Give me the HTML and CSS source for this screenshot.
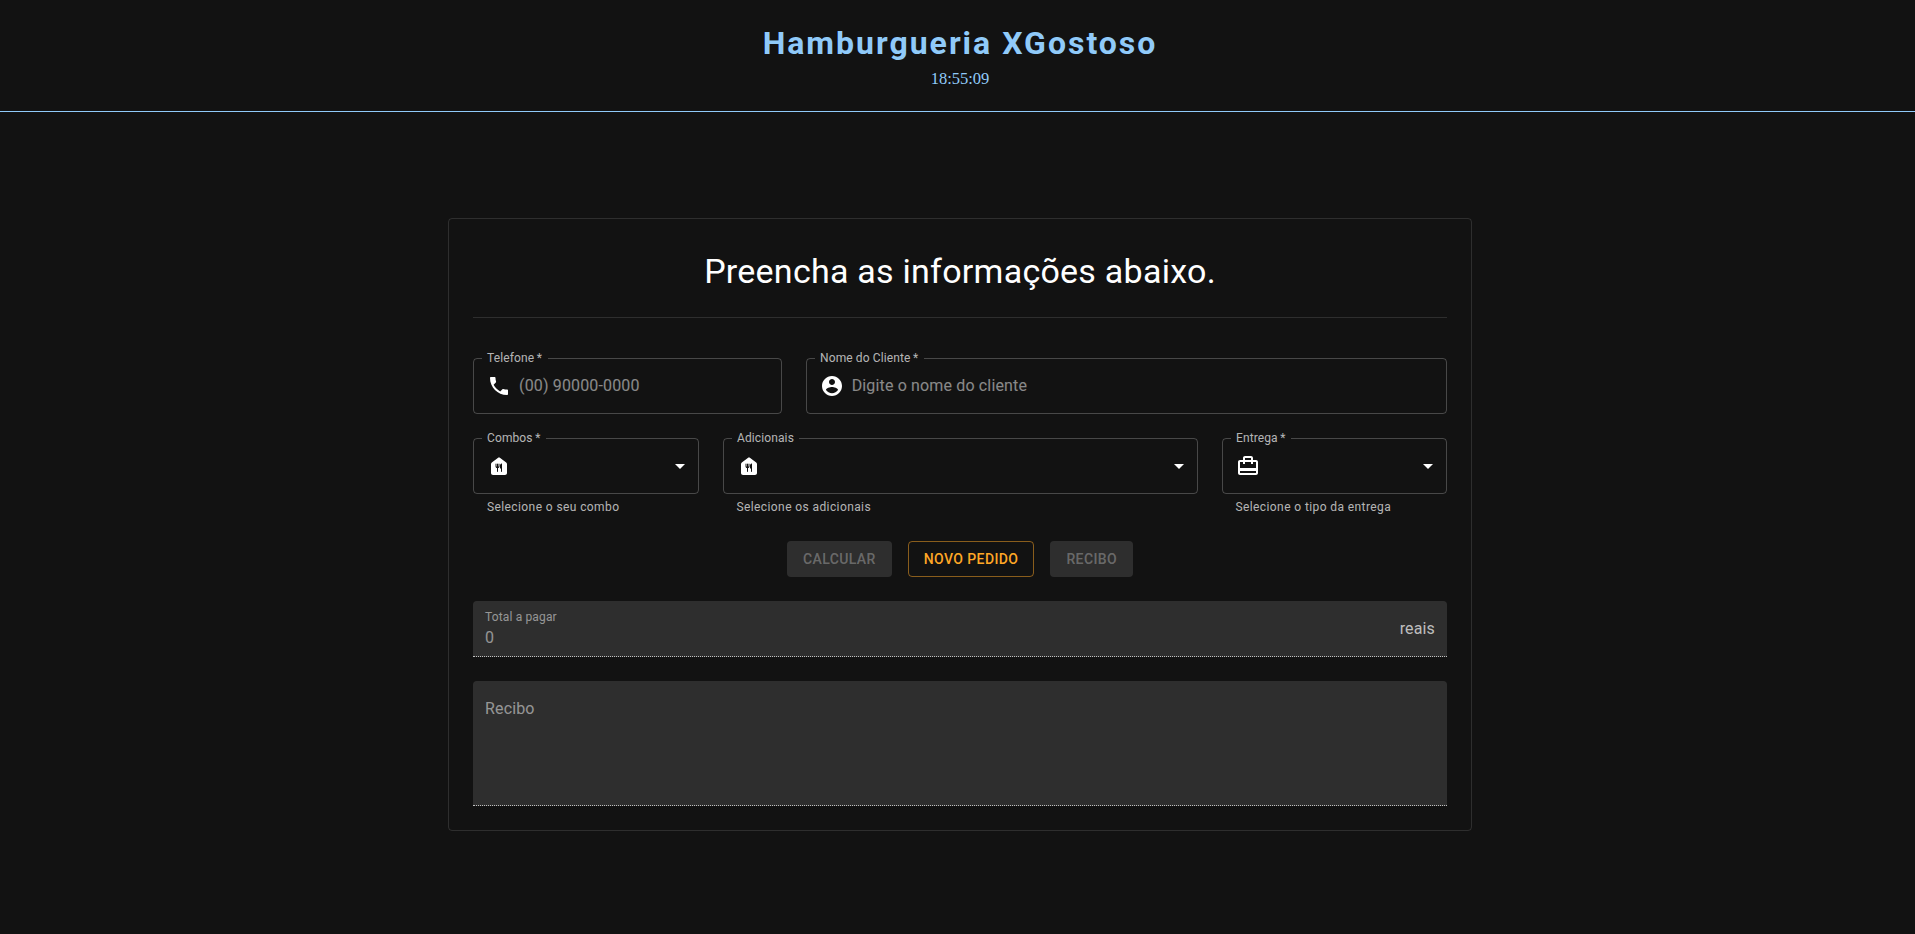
FILE: index.html
```html
<!DOCTYPE html>
<html lang="pt-BR">
<head>
<meta charset="utf-8">
<title>Hamburgueria XGostoso</title>
<link rel="stylesheet" href="styles.css">
</head>
<body>
<div class="page">
<header class="header">
  <h1 class="brand">Hamburgueria XGostoso</h1>
  <time class="clock">18:55:09</time>
</header>
<main class="card">
  <h2 class="title">Preencha as informações abaixo.</h2>
  <hr class="divider">
  <form class="grid">
    <div class="field col-4">
      <label class="label">Telefone&thinsp;*</label>
      <div class="control">
        <svg class="icon" viewBox="0 0 24 24"><path d="M6.62 10.79c1.44 2.83 3.76 5.14 6.59 6.59l2.2-2.2c.27-.27.67-.36 1.02-.24 1.12.37 2.33.57 3.57.57.55 0 1 .45 1 1V20c0 .55-.45 1-1 1-9.39 0-17-7.61-17-17 0-.55.45-1 1-1h3.5c.55 0 1 .45 1 1 0 1.25.2 2.45.57 3.57.11.35.03.74-.25 1.02l-2.2 2.2z"/></svg>
        <input class="input" placeholder="(00) 90000-0000">
        <fieldset class="outline"><legend class="notch">Telefone *</legend></fieldset>
      </div>
    </div>
    <div class="field col-8">
      <label class="label">Nome do Cliente&thinsp;*</label>
      <div class="control">
        <svg class="icon" viewBox="0 0 24 24"><path d="M12 2C6.48 2 2 6.48 2 12s4.48 10 10 10 10-4.48 10-10S17.52 2 12 2zm0 3c1.66 0 3 1.34 3 3s-1.34 3-3 3-3-1.34-3-3 1.34-3 3-3zm0 14.2c-2.5 0-4.71-1.28-6-3.22.03-1.99 4-3.08 6-3.08 1.99 0 5.97 1.09 6 3.08-1.29 1.94-3.5 3.22-6 3.22z"/></svg>
        <input class="input" placeholder="Digite o nome do cliente">
        <fieldset class="outline"><legend class="notch">Nome do Cliente *</legend></fieldset>
      </div>
    </div>
    <div class="field col-3">
      <label class="label">Combos&thinsp;*</label>
      <div class="control select">
        <svg class="icon" viewBox="0 0 24 24"><path d="M19.2 8.4l-6-4.5c-.71-.53-1.69-.53-2.4 0l-6 4.5C4.3 8.78 4 9.37 4 10v9c0 1.1.9 2 2 2h12c1.1 0 2-.9 2-2v-9c0-.63-.3-1.22-.8-1.6zM12.5 12.5c0 .83-.67 1.5-1.5 1.5v3.5c0 .28-.22.5-.5.5s-.5-.22-.5-.5V14c-.83 0-1.5-.67-1.5-1.5V10c0-.28.22-.5.5-.5s.5.22.5.5v2.5h.5V10c0-.28.22-.5.5-.5s.5.22.5.5v2.5h.5V10c0-.28.22-.5.5-.5s.5.22.5.5v2.5zM15 17.500c0 .28-.22.5-.5.5s-.5-.22-.5-.5v-3h-1v-3c0-.97.7-1.78 1.62-1.96.2-.04.38.12.38.32v8.14z"/></svg>
        <svg class="icon" viewBox="0 0 24 24"><path d="M7 10l5 5 5-5z"/></svg>
        <fieldset class="outline"><legend class="notch">Combos *</legend></fieldset>
      </div>
      <p class="helper">Selecione o seu combo</p>
    </div>
    <div class="field col-6">
      <label class="label">Adicionais</label>
      <div class="control select">
        <svg class="icon" viewBox="0 0 24 24"><path d="M19.2 8.4l-6-4.5c-.71-.53-1.69-.53-2.4 0l-6 4.5C4.3 8.78 4 9.37 4 10v9c0 1.1.9 2 2 2h12c1.1 0 2-.9 2-2v-9c0-.63-.3-1.22-.8-1.6zM12.5 12.5c0 .83-.67 1.5-1.5 1.5v3.5c0 .28-.22.5-.5.5s-.5-.22-.5-.5V14c-.83 0-1.5-.67-1.5-1.5V10c0-.28.22-.5.5-.5s.5.22.5.5v2.5h.5V10c0-.28.22-.5.5-.5s.5.22.5.5v2.5h.5V10c0-.28.22-.5.5-.5s.5.22.5.5v2.5zM15 17.500c0 .28-.22.5-.5.5s-.5-.22-.5-.5v-3h-1v-3c0-.97.7-1.78 1.62-1.96.2-.04.38.12.38.32v8.14z"/></svg>
        <svg class="icon" viewBox="0 0 24 24"><path d="M7 10l5 5 5-5z"/></svg>
        <fieldset class="outline"><legend class="notch">Adicionais</legend></fieldset>
      </div>
      <p class="helper">Selecione os adicionais</p>
    </div>
    <div class="field col-3">
      <label class="label">Entrega&thinsp;*</label>
      <div class="control select">
        <svg class="icon" viewBox="0 0 24 24"><path d="M20 6h-3V4c0-1.11-.89-2-2-2H9c-1.11 0-2 .89-2 2v2H4c-1.11 0-2 .89-2 2v11c0 1.11.89 2 2 2h16c1.11 0 2-.89 2-2V8c0-1.11-.89-2-2-2zM9 4h6v2H9V4zm11 15H4v-2h16v2zm0-5H4V8h3v2h2V8h6v2h2V8h3v6z"/></svg>
        <svg class="icon" viewBox="0 0 24 24"><path d="M7 10l5 5 5-5z"/></svg>
        <fieldset class="outline"><legend class="notch">Entrega *</legend></fieldset>
      </div>
      <p class="helper">Selecione o tipo da entrega</p>
    </div>
    <div class="actions">
      <button class="button disabled" type="button">Calcular</button>
      <button class="button outlined" type="button">Novo pedido</button>
      <button class="button disabled" type="button">Recibo</button>
    </div>
    <div class="filled total">
      <div class="total-text">
        <span class="total-label">Total a pagar</span>
        <span class="total-value">0</span>
      </div>
      <span class="unit">reais</span>
    </div>
    <div class="filled receipt">Recibo</div>
  </form>
</main>
</div>
</body>
</html>
```
FILE: styles.css
```css
* { box-sizing: border-box; }

body {
  margin: 0;
  min-height: 934px;
  overflow: hidden;
  background: #121212;
  color: #fff;
  font: 400 16px/1.5 Roboto, sans-serif;
  letter-spacing: 0.00938em;
}

.page {
  width: 1920px;
}

.header {
  display: flex;
  flex-direction: column;
  align-items: center;
  height: 112px;
  padding-top: 24px;
  border-bottom: 1px solid #90caf9;
  color: #90caf9;
}

.brand {
  margin: 0;
  font-size: 32px;
  font-weight: 700;
  line-height: 38px;
  letter-spacing: 2px;
}

.clock {
  margin-top: 7px;
  font: 16.5px/19px "Liberation Serif", serif;
  letter-spacing: 0;
}

.card {
  width: 1024px;
  height: 613px;
  margin: 106px auto 0;
  padding: 24px;
  border: 1px solid rgba(255, 255, 255, 0.12);
  border-radius: 4px;
}

.title {
  margin: 7px 0 25px;
  font-size: 34px;
  font-weight: 400;
  line-height: 42px;
  letter-spacing: 0.00735em;
  text-align: center;
}

.divider {
  height: 1px;
  margin: 0 0 40px;
  border: 0;
  background: rgba(255, 255, 255, 0.12);
}

.grid {
  display: grid;
  grid-template-columns: repeat(12, 1fr);
  gap: 24px;
}

.col-3 { grid-column: span 3; }
.col-4 { grid-column: span 4; }
.col-6 { grid-column: span 6; }
.col-8 { grid-column: span 8; }

.field {
  position: relative;
  min-width: 0;
}

.label {
  position: absolute;
  top: 0;
  left: 0;
  color: rgba(255, 255, 255, 0.7);
  line-height: 23px;
  white-space: nowrap;
  transform: translate(14px, -9px) scale(0.75);
  transform-origin: top left;
}

.control {
  position: relative;
  display: flex;
  align-items: center;
  gap: 8px;
  height: 56px;
  padding: 0 14px;
}

.select {
  justify-content: space-between;
  padding-right: 7px;
}

.icon {
  flex: none;
  width: 24px;
  height: 24px;
  fill: #fff;
}

.input {
  flex: 1;
  min-width: 0;
  height: 23px;
  padding: 0;
  border: 0;
  outline: 0;
  background: none;
  color: #fff;
  font: inherit;
  letter-spacing: inherit;
}

.input::placeholder {
  color: #fff;
  opacity: 0.5;
}

.outline {
  position: absolute;
  inset: -5px 0 0;
  min-width: 0;
  margin: 0;
  padding: 0 8px;
  border: 1px solid rgba(255, 255, 255, 0.23);
  border-radius: 4px;
  pointer-events: none;
}

.notch {
  height: 11px;
  padding: 0 5px;
  font-size: 12px;
  line-height: 11px;
  visibility: hidden;
}

.helper {
  margin: 3px 14px 0;
  color: rgba(255, 255, 255, 0.7);
  font-size: 12px;
  line-height: 20px;
  letter-spacing: 0.03333em;
}

.actions {
  grid-column: 1 / -1;
  display: flex;
  justify-content: center;
  gap: 16px;
}

.button {
  height: 36px;
  padding: 0 16px;
  border: 0;
  border-radius: 4px;
  font: 500 14px/24px Roboto, sans-serif;
  letter-spacing: 0.02857em;
  text-transform: uppercase;
}

.disabled {
  background: rgba(255, 255, 255, 0.12);
  color: rgba(255, 255, 255, 0.3);
}

.outlined {
  padding: 0 15px;
  border: 1px solid rgba(255, 167, 38, 0.5);
  background: none;
  color: #ffa726;
}

.filled {
  grid-column: 1 / -1;
  border-bottom: 1px dotted rgba(255, 255, 255, 0.7);
  border-radius: 4px 4px 0 0;
  background: rgba(255, 255, 255, 0.12);
  color: rgba(255, 255, 255, 0.5);
}

.total {
  display: flex;
  align-items: center;
  justify-content: space-between;
  height: 56px;
  padding: 0 12px;
}

.total-text {
  display: flex;
  flex-direction: column;
}

.total-label {
  height: 18px;
  font-size: 12px;
  line-height: 19px;
}

.total-value {
  line-height: 23px;
}

.unit {
  color: rgba(255, 255, 255, 0.7);
}

.receipt {
  height: 125px;
  padding: 16px 12px;
}
```
